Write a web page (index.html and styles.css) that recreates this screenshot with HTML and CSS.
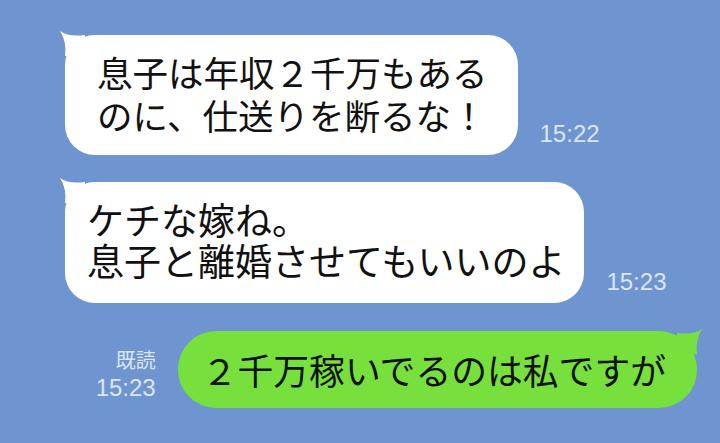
FILE: index.html
```html
<!DOCTYPE html>
<html lang="ja">
<head>
    <meta charset="UTF-8">
    <meta name="viewport" content="width=device-width, initial-scale=1.0">
    <title>トーク</title>
    <link rel="stylesheet" href="styles.css">
</head>
<body>
    <div class="Talk">

        <div class="Row">
            <div class="Bubble Left Wide">
                <svg class="Tail TailLeft" viewBox="0 0 30 26"><path d="M1 1 Q9 7 26 5 L26 26 L6 26 Q8 12 1 1 Z" fill="#ffffff"/></svg>
                <p>息子は年収２千万もある<br>のに、仕送りを断るな！</p>
            </div>
            <span class="Time">15:22</span>
        </div>

        <div class="Row Second">
            <div class="Bubble Left">
                <svg class="Tail TailLeft" viewBox="0 0 30 26"><path d="M1 1 Q9 7 26 5 L26 26 L6 26 Q8 12 1 1 Z" fill="#ffffff"/></svg>
                <p>ケチな嫁ね。<br>息子と離婚させてもいいのよ</p>
            </div>
            <span class="Time">15:23</span>
        </div>

        <div class="Row Mine">
            <div class="Read">
                <span>既読</span>
                <span>15:23</span>
            </div>
            <div class="Bubble Right">
                <svg class="Tail TailRight" viewBox="0 0 30 26"><path d="M29 1 Q21 7 4 5 L4 26 L24 26 Q22 12 29 1 Z" fill="#78e03c"/></svg>
                <p>２千万稼いでるのは私ですが</p>
            </div>
        </div>

    </div>
</body>
</html>
```

FILE: styles.css
```css
*{
    box-sizing: border-box;
    margin: 0;
    padding: 0;
}
body{
    background-color: #6e95cf;
    font-family: "Noto Sans CJK JP", "Noto Sans", sans-serif;
    width: 720px;
    height: 443px;
    overflow: hidden;
}
.Talk{
    display: flex;
    flex-direction: column;
    padding-top: 35px;
    padding-left: 65px;
}
.Row{
    display: flex;
    align-items: flex-end;
}
.Second{
    margin-top: 27px;
}
.Mine{
    margin-top: 28px;
    justify-content: flex-end;
    padding-right: 23px;
}
.Bubble{
    position: relative;
    background-color: #ffffff;
    color: #111111;
    border-radius: 30px;
    padding: 17px 19px 22px 22px;
}
.Bubble p{
    font-size: 37px;
    line-height: 41px;
    white-space: nowrap;
}
.Wide{
    padding: 15px 30px 19px 32px;
}
.Wide p{
    font-size: 35.5px;
    line-height: 43px;
}
.Right{
    background-color: #78e03c;
    padding: 18px 31px 18px 24px;
    border-radius: 38px;
}
.Right p{
    font-size: 35.8px;
}
.Tail{
    position: absolute;
    width: 30px;
    height: 26px;
}
.TailLeft{
    left: -6px;
    top: -5px;
}
.TailRight{
    right: -6px;
    top: -3px;
}
.Time{
    color: #dce6f5;
    font-family: "Liberation Sans", Arial, sans-serif;
    font-size: 24px;
    margin-left: 22px;
    margin-bottom: 7px;
}
.Read{
    display: flex;
    flex-direction: column;
    align-items: flex-end;
    color: #dce6f5;
    font-size: 20px;
    line-height: 28px;
    margin-right: 22px;
    margin-bottom: 6px;
}
.Read span:last-child{
    font-family: "Liberation Sans", Arial, sans-serif;
    font-size: 24px;
}
```
